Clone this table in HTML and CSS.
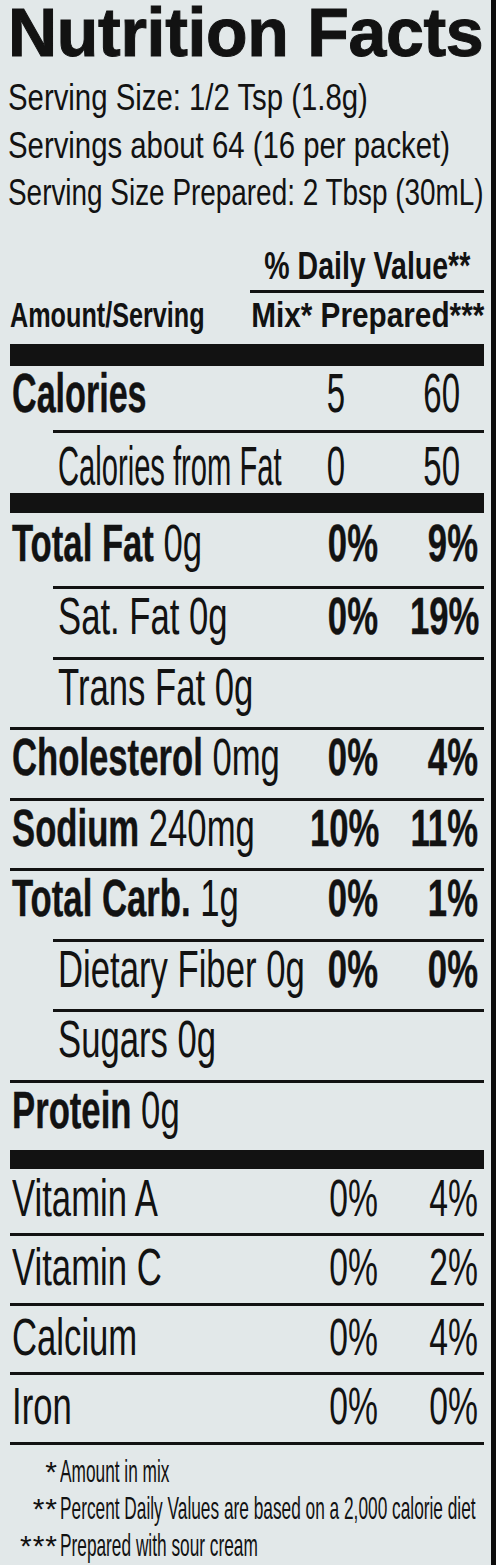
FILE: index.html
```html
<!DOCTYPE html>
<html lang="en">
<head>
  <meta charset="UTF-8" />
  <title>Nutrition Facts</title>
  <link rel="stylesheet" href="styles.css">
</head>
<body>
  <div class="label">
    <h1 class="title">Nutrition Facts</h1>

    <div class="serving">
      <p><span class="sq">Serving Size: 1/2 Tsp (1.8g)</span></p>
      <p><span class="sq">Servings about 64 (16 per packet)</span></p>
      <p><span class="sq tight">Serving Size Prepared: 2 Tbsp (30mL)</span></p>
    </div>

    <div class="dv-head"><span>% Daily Value**</span></div>
    <div class="amount">
      <span class="amount-lbl">Amount/Serving</span>
      <span class="amount-cols">Mix* Prepared***</span>
    </div>

    <div class="row cal">
      <div class="lbl"><b>Calories</b></div>
      <div class="val mix">5</div>
      <div class="val prep">60</div>
    </div>
    <div class="row cal-fat sub">
      <div class="lbl">Calories from Fat</div>
      <div class="val mix">0</div>
      <div class="val prep">50</div>
    </div>

    <div class="row heavy">
      <div class="lbl"><b>Total Fat</b> 0g</div>
      <div class="val">0%</div>
      <div class="val">9%</div>
    </div>
    <div class="row sub">
      <div class="lbl">Sat. Fat 0g</div>
      <div class="val">0%</div>
      <div class="val">19%</div>
    </div>
    <div class="row sub">
      <div class="lbl">Trans Fat 0g</div>
    </div>
    <div class="row">
      <div class="lbl"><b>Cholesterol</b> 0mg</div>
      <div class="val">0%</div>
      <div class="val">4%</div>
    </div>
    <div class="row">
      <div class="lbl"><b>Sodium</b> 240mg</div>
      <div class="val">10%</div>
      <div class="val">11%</div>
    </div>
    <div class="row">
      <div class="lbl"><b>Total Carb.</b> 1g</div>
      <div class="val">0%</div>
      <div class="val">1%</div>
    </div>
    <div class="row sub">
      <div class="lbl">Dietary Fiber 0g</div>
      <div class="val">0%</div>
      <div class="val">0%</div>
    </div>
    <div class="row sub">
      <div class="lbl">Sugars 0g</div>
    </div>
    <div class="row">
      <div class="lbl"><b>Protein</b> 0g</div>
    </div>

    <div class="row vit first">
      <div class="lbl">Vitamin A</div>
      <div class="val">0%</div>
      <div class="val">4%</div>
    </div>
    <div class="row vit">
      <div class="lbl">Vitamin C</div>
      <div class="val">0%</div>
      <div class="val">2%</div>
    </div>
    <div class="row vit">
      <div class="lbl">Calcium</div>
      <div class="val">0%</div>
      <div class="val">4%</div>
    </div>
    <div class="row vit">
      <div class="lbl">Iron</div>
      <div class="val">0%</div>
      <div class="val">0%</div>
    </div>

    <div class="notes">
      <div class="note"><span class="star">*</span><span class="note-txt">Amount in mix</span></div>
      <div class="note"><span class="star">**</span><span class="note-txt">Percent Daily Values are based on a 2,000 calorie diet</span></div>
      <div class="note"><span class="star">***</span><span class="note-txt">Prepared with sour cream</span></div>
    </div>
  </div>
</body>
</html>
```

FILE: styles.css
```css
* {
  margin: 0;
  padding: 0;
  box-sizing: border-box;
}

html, body {
  overflow: hidden;
}

body {
  background-color: #e2e8e9;
  color: #121212;
  font-family: "Liberation Sans", Arial, sans-serif;
}

.label {
  width: 496px;
  min-height: 1565px;
  padding: 0 7px 0 10px;
  border-right: 5px solid #0c0c0c;
  overflow: hidden;
}

.title {
  margin: 0 -7px 0 -2px;
  font-size: 68px;
  line-height: 64px;
  font-weight: bold;
  letter-spacing: -0.3px;
  white-space: nowrap;
  -webkit-text-stroke: 1px #121212;
}

/* serving info */
.serving {
  margin-top: 10px;
  margin-left: -2px;
}

.serving p {
  font-size: 36px;
  line-height: 47.5px;
  white-space: nowrap;
}

.sq {
  display: inline-block;
  transform: scaleX(0.815);
  transform-origin: left;
}

.sq.tight {
  transform: scaleX(0.775);
}

/* column headings */
.dv-head {
  display: flex;
  justify-content: center;
  margin-top: 29.5px;
  margin-left: 240px;
  padding-bottom: 4px;
  border-bottom: 3px solid #121212;
  font-size: 38px;
  line-height: 40px;
  font-weight: bold;
  white-space: nowrap;
}

.dv-head span {
  flex: none;
  transform: scaleX(0.75);
}

.amount {
  display: flex;
  justify-content: space-between;
  margin-top: 2px;
  padding-bottom: 9px;
  font-size: 35px;
  line-height: 40px;
  font-weight: bold;
  white-space: nowrap;
}

.amount-lbl {
  flex: 1;
  min-width: 0;
  transform: scaleX(0.72);
  transform-origin: left;
}

.amount-cols {
  flex: none;
  transform: scaleX(0.85);
  transform-origin: right;
}

/* nutrient rows */
.row {
  display: grid;
  grid-template-columns: minmax(0, 1fr) 100px 100px;
  padding-right: 6px;
  padding-bottom: 11.5px;
  border-top: 3px solid #121212;
  font-size: 51px;
  line-height: 56px;
  white-space: nowrap;
}

.row b {
  -webkit-text-stroke: 0.4px #121212;
}

.lbl {
  min-width: 0;
  margin-left: 2px;
  transform: scaleX(0.68);
  transform-origin: left;
}

.val {
  grid-row: 1;
  text-align: right;
  font-weight: bold;
  transform: scaleX(0.68);
  transform-origin: right;
  -webkit-text-stroke: 0.4px #121212;
}

.val:nth-child(2) {
  grid-column: 2;
}

.val:nth-child(3) {
  grid-column: 3;
}

.row.sub {
  margin-left: 43px;
}

.row.sub .lbl {
  margin-left: 5px;
}

.row.heavy {
  border-top-width: 20px;
  padding-top: 3px;
  padding-bottom: 14px;
}

/* calories block */
.row.cal,
.row.cal-fat {
  font-size: 55px;
  line-height: 54px;
}

.row.cal {
  border-top-width: 22px;
  padding-bottom: 10px;
}

.row.cal .lbl {
  transform: scaleX(0.62);
}

.row.cal-fat {
  padding-top: 6px;
  padding-bottom: 0;
}

.row.cal-fat .lbl {
  transform: scaleX(0.53);
}

.row.cal .val,
.row.cal-fat .val {
  font-weight: normal;
  -webkit-text-stroke: 0;
  transform: scaleX(0.6);
}

.val.mix {
  margin-right: 33px;
}

.val.prep {
  margin-right: 18px;
}

/* vitamins */
.row.vit {
  padding-top: 4px;
  padding-bottom: 6.7px;
}

.row.vit.first {
  border-top-width: 19px;
  padding-top: 2px;
  padding-bottom: 6px;
}

.row.vit .val {
  font-weight: normal;
  -webkit-text-stroke: 0;
  transform: scaleX(0.66);
}

/* footnotes */
.notes {
  border-top: 3px solid #121212;
  padding-top: 8px;
  font-size: 32px;
  line-height: 37px;
}

.note {
  display: flex;
  white-space: nowrap;
}

.star {
  flex: none;
  width: 48px;
  text-align: right;
  font-size: 30px;
  letter-spacing: 1px;
}

.note-txt {
  flex: 1;
  min-width: 0;
  margin-left: 2px;
  transform: scaleX(0.54);
  transform-origin: left;
}
```
